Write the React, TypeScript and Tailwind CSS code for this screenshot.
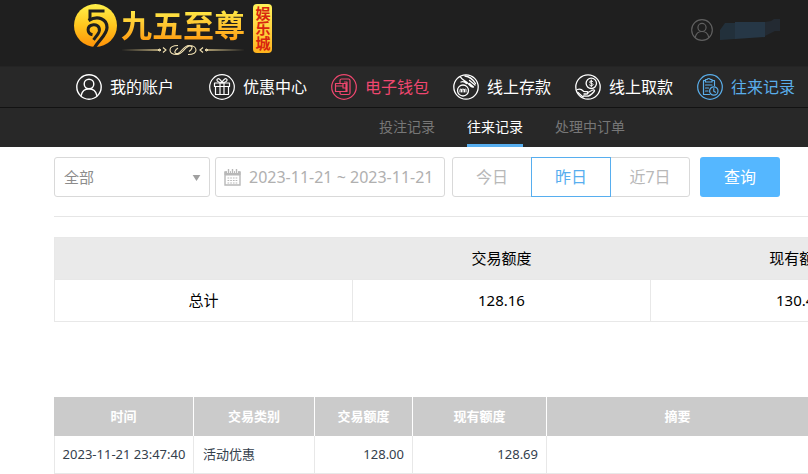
import React from "react";

type IconProps = { className?: string };

const iconBase = {
  viewBox: "0 0 26 26",
  fill: "none",
  stroke: "currentColor",
  strokeWidth: 1.4,
  strokeLinecap: "round" as const,
  strokeLinejoin: "round" as const,
  "aria-hidden": true,
};

const UserIcon: React.FC<IconProps> = ({ className }) => (
  <svg {...iconBase} className={className}>
    <circle cx="13" cy="13" r="12.2" />
    <circle cx="13" cy="10" r="4.8" />
    <path d="M5 21.8c1-4.5 4-7 8-7s7 2.500 8 7" />
  </svg>
);

const GiftIcon: React.FC<IconProps> = ({ className }) => (
  <svg {...iconBase} strokeWidth={1.2} className={className}>
    <circle cx="13" cy="13" r="12.3" />
    <path d="M5.500 9h15v3.500h-15zM6.500 12.500h13v8h-13zM11 9v11.500M15 9v11.500" />
    <path d="M13 9C10 8.500 7.500 7.500 8 5.500c.6-1.800 4-.5 5 3.500 1-4 4.400-5.300 5-3.500.5 2-2 3-5 3.500z" />
  </svg>
);

const WalletIcon: React.FC<IconProps> = ({ className }) => (
  <svg {...iconBase} strokeWidth={1.2} className={className}>
    <circle cx="13" cy="13" r="12.3" />
    <path d="M9 9V6.500q0-1.500 1.500-1.500h7q1.500 0 1.500 1.500v12.500q0 1.500-1.500 1.500h-7q-1.500 0-1.500-1.500v-1.500" />
    <path d="M4.500 9.500H15v8H4.500zM4.500 12H12M12 9.500v4.500h4V8h-2.500M16 14v3.500h-1" />
  </svg>
);

const DepositIcon: React.FC<IconProps> = ({ className }) => (
  <svg {...iconBase} strokeWidth={1.300} className={className}>
    <circle cx="13" cy="13" r="12.2" />
    <circle cx="10" cy="16.500" r="5.500" />
    <path
      d="M7 18v-2.500q1.500-1.200 1.500 0V18M8.500 15.500q1.500-1.200 1.500 0V18M10 15.500q1.500-1.200 1.500 0V18M11.500 15.500q1.500-1.200 1.500 0V18"
      strokeWidth="1"
    />
    <path d="M7.500 3c1.500 3 4 3.500 6 5 2 1.600 3 4.500 6 5M12 2c4.500.5 8 3.500 10.500 7.500M8 8c2-.8 4 0 5.500 1.500M16.500 6.500l5.500 4.500M16.500 9.500l4 3.500" />
  </svg>
);

const WithdrawIcon: React.FC<IconProps> = ({ className }) => (
  <svg {...iconBase} strokeWidth={1.300} className={className}>
    <circle cx="13" cy="13" r="12.2" />
    <circle cx="16.300" cy="9.300" r="5.200" />
    <path
      d="M17.900 7.700c-.7-1-3.300-1-3.300.4 0 1.500 3.500.9 3.500 2.500 0 1.400-2.700 1.400-3.600.4M16.300 6v6.700"
      strokeWidth="1"
    />
    <path d="M2.500 15.500c2.500-1 4.500.2 6 1.800l3.500.4c1.800.3 1 2.300-.5 2.300H9M12.500 18.800l5.300-2.800c1.500-.6 2.200.5 1.300 1.500-2.300 2.800-4.300 4.700-7.300 4.700L8.500 22M3 18.500l5 4.500" />
  </svg>
);

const RecordIcon: React.FC<IconProps> = ({ className }) => (
  <svg {...iconBase} strokeWidth={1.200} className={className}>
    <circle cx="13" cy="13" r="12.3" />
    <path d="M8.500 6.500h-2v14h6M15 6.500h2.500v5M8.500 5.500h1.500q1.700-2 3.500 0H15V8H8.500zM8.500 11H15M8.500 14h3M8.500 17h2.500" />
    <circle cx="16.800" cy="17" r="4.200" />
    <path d="M16.800 14.500v2.700l1.700 1" />
  </svg>
);

const CalendarIcon: React.FC<IconProps> = ({ className }) => (
  <svg viewBox="0 0 17 17" fill="none" stroke="currentColor" aria-hidden className={className}>
    <path d="M1 3h15v13H1z" strokeWidth="1.400" />
    <path d="M1 3h15v3H1z" fill="currentColor" />
    <path d="M4.500 0v4M8.500 0v4M12.500 0v4" stroke="#fff" strokeWidth="3" />
    <path d="M4.500 0v4.500M8.500 0v4.500M12.500 0v4.500" strokeWidth="1.400" />
    <path d="M3.500 9h10M3.500 11.500h10M3.500 14h10" strokeWidth="1.200" strokeDasharray="1.700 1" />
  </svg>
);

const Logo: React.FC = () => (
  <a href="#" className="flex items-start">
    <svg viewBox="0 0 43 43" className="mt-1 size-[43px]" aria-hidden>
      <defs>
        <linearGradient id="gold" x1="0" y1="0" x2="0" y2="1">
          <stop offset="0" stopColor="#fff04a" />
          <stop offset="0.5" stopColor="#ffc61e" />
          <stop offset="1" stopColor="#ff9208" />
        </linearGradient>
      </defs>
      <circle cx="21.500" cy="21.500" r="21.500" fill="url(#gold)" />
      <g fill="none" stroke="#1f1f1f">
        <path d="M30.500 7H16v9" strokeWidth="3" />
        <path d="M14.500 16.500c9.500-5.500 18.500-1.500 18.500 7 0 7-7 11.500-12.500 20" strokeWidth="3.200" />
        <path d="M18.500 30.800c-5.500-1-6.500-9 .8-10 5.700-.5 7.700 4.700 4.700 9-1.500 2.200-3 4-4.500 6" strokeWidth="3" />
      </g>
    </svg>
    <div className="ml-1 flex flex-col items-center pt-2">
      <span className="bg-linear-to-b from-[#fff04a] to-[#ff9a0a] bg-clip-text text-[31px] leading-[34px] font-bold text-transparent">
        九五至尊
      </span>
      <svg viewBox="0 0 124 14" className="h-[14px] w-[124px]" fill="none" stroke="#f3e3b4" aria-hidden>
        <path d="M0 8l38-.8v1.600zM124 8l-38-.8v1.600z" fill="#d8c48c" stroke="none" />
        <path d="M37 8l1.500-1 1.500 1-1.500 1zM87 8l-1.500-1-1.500 1 1.500 1z" fill="#f3e3b4" />
        <path
          d="M42 5.500l3 2.500-3 2.500M82 5.500L79 8l3 2.500M49 8c0-3 3-4.500 8-4.500M49 8c0 3 3 4.500 7 4.500 6 0 8-8.500 13-8.500 3.500 0 2 3.500-1 5.500M75 8c0 3-3 4.500-8 4.500M75 8c0-3-3-4.500-7-4.500-6 0-8 8.500-12.500 8-3-.5-1.500-3.500 1.500-5.500"
          strokeWidth="1.100"
        />
      </svg>
    </div>
    <span className="mt-1 ml-2 flex h-[49px] w-[19px] flex-col items-center justify-center rounded-sm bg-linear-to-b from-[#fff35a] to-[#ffb31c] text-[15px] leading-4 font-bold text-[#d8260f] [writing-mode:vertical-rl]">
      娱乐城
    </span>
  </a>
);

const navItems = [
  { label: "我的账户", icon: UserIcon, style: "text-white mr-[11px]" },
  { label: "优惠中心", icon: GiftIcon, style: "text-white" },
  { label: "电子钱包", icon: WalletIcon, style: "text-[#ef476f]" },
  { label: "线上存款", icon: DepositIcon, style: "text-white" },
  { label: "线上取款", icon: WithdrawIcon, style: "text-white" },
  { label: "往来记录", icon: RecordIcon, style: "text-[#5aaeea]" },
];

const subItems = ["投注记录", "往来记录", "处理中订单"];

const ranges = ["今日", "昨日", "近7日"];

const App: React.FC = () => {
  const [range, setRange] = React.useState("昨日");

  return (
    <div className="overflow-x-hidden bg-white font-['Noto_Sans','Noto_Sans_CJK_SC',sans-serif] text-black">
      <header className="bg-[#1f1f1f]">
        <div className="flex h-[66px] items-start justify-between pr-7 pl-[74px]">
          <Logo />
          <div className="flex items-center gap-[7px] pt-[19px] text-[#606060]">
            <UserIcon className="size-[22px]" />
            <svg viewBox="0 0 60 22" className="h-[22px] w-[60px]" aria-hidden>
              <path d="M0 11l5-7h10v16l-15 1z" fill="#22303b" />
              <path d="M15 3h30v15l-30 2z" fill="#263746" />
              <path d="M45 3l6-1 3-2h6v12h-5l-10 5z" fill="#232a32" />
            </svg>
          </div>
        </div>
        <nav className="flex h-[42px] items-center gap-6 border-t border-b border-t-[#242424] border-b-[#121212] bg-[#282828] pl-[76px]">
          {navItems.map(({ label, icon: Icon, style }) => (
            <a
              key={label}
              href="#"
              className={`flex shrink-0 items-center gap-2 text-base whitespace-nowrap ${style}`}
            >
              <Icon className="size-[26px]" />
              {label}
            </a>
          ))}
        </nav>
        <nav className="flex h-[39px] gap-8 bg-[#282828] pl-[379px] text-sm">
          {subItems.map((label) => (
            <a
              key={label}
              href="#"
              className={`flex shrink-0 items-center border-b-3 pt-px whitespace-nowrap ${
                label === "往来记录" ? "border-[#57aeef] text-white" : "border-transparent text-[#777]"
              }`}
            >
              {label}
            </a>
          ))}
        </nav>
      </header>

      <main className="pl-[54px]">
        <form className="flex items-center border-b border-[#e6e6e6] pt-[10px] pb-[19px]">
          <div className="relative">
            <select
              aria-label="交易类别"
              className="h-10 w-[156px] appearance-none rounded-[3px] border border-[#d9d9d9] bg-white pl-[9px] text-[15px] text-[#8c8c8c]"
            >
              <option>全部</option>
            </select>
            <svg
              viewBox="0 0 9 7"
              className="pointer-events-none absolute top-[18px] right-[9px] h-[6px] w-[9px] fill-[#a0a0a0]"
              aria-hidden
            >
              <path d="M0 0h9L4.500 7z" />
            </svg>
          </div>
          <label className="ml-[5px] flex h-10 w-[230px] items-center gap-2 rounded-[3px] border border-[#d9d9d9] pl-2 text-[#b8b8b8]">
            <CalendarIcon className="size-[17px] shrink-0" />
            <input
              type="text"
              aria-label="日期"
              defaultValue="2023-11-21 ~ 2023-11-21"
              className="min-w-0 flex-1 text-base text-[#b0b0b0] outline-none"
            />
          </label>
          <div className="ml-[7px] flex h-10 rounded-[3px] border border-[#d9d9d9] text-base">
            {ranges.map((item) => (
              <button
                key={item}
                type="button"
                onClick={() => setRange(item)}
                className={
                  item === range
                    ? "-my-px w-20 border border-[#57aeef] text-[#57aeef]"
                    : "w-[78px] text-[#b8b8b8]"
                }
              >
                {item}
              </button>
            ))}
          </div>
          <button type="submit" className="ml-[10px] h-10 w-20 rounded-[3px] bg-[#55b7ff] text-base text-white">
            查询
          </button>
        </form>

        <table className="mt-5 w-full min-w-[895px] table-fixed border-collapse border border-[#e8e8e8] text-center text-[15px]">
          <thead>
            <tr className="h-[42px] bg-[#eaeaea]">
              <th className="font-normal"></th>
              <th className="font-normal">交易额度</th>
              <th className="font-normal">现有额度</th>
            </tr>
          </thead>
          <tbody>
            <tr className="h-[42px]">
              <td className="border border-[#e8e8e8]">总计</td>
              <td className="border border-[#e8e8e8]">128.16</td>
              <td className="border border-[#e8e8e8]">130.45</td>
            </tr>
          </tbody>
        </table>

        <table className="mt-[75px] w-full table-fixed border-separate border-spacing-0 text-[13px] text-[#34404c]">
          <thead>
            <tr className="h-[39px] bg-[#cbcbcb] text-white">
              <th className="w-[140px] border-r border-white">时间</th>
              <th className="w-[121px] border-r border-white">交易类别</th>
              <th className="w-[98px] border-r border-white">交易额度</th>
              <th className="w-[134px] border-r border-white">现有额度</th>
              <th>摘要</th>
            </tr>
          </thead>
          <tbody>
            <tr className="h-[38px]">
              <td className="border-r border-b border-l border-[#e8e8e8] text-center whitespace-nowrap">
                2023-11-21 23:47:40
              </td>
              <td className="border-r border-b border-[#e8e8e8] px-[9px]">活动优惠</td>
              <td className="border-r border-b border-[#e8e8e8] px-2 text-right">128.00</td>
              <td className="border-r border-b border-[#e8e8e8] px-2 text-right">128.69</td>
              <td className="border-b border-[#e8e8e8]"></td>
            </tr>
          </tbody>
        </table>
      </main>
    </div>
  );
};

export default App;
